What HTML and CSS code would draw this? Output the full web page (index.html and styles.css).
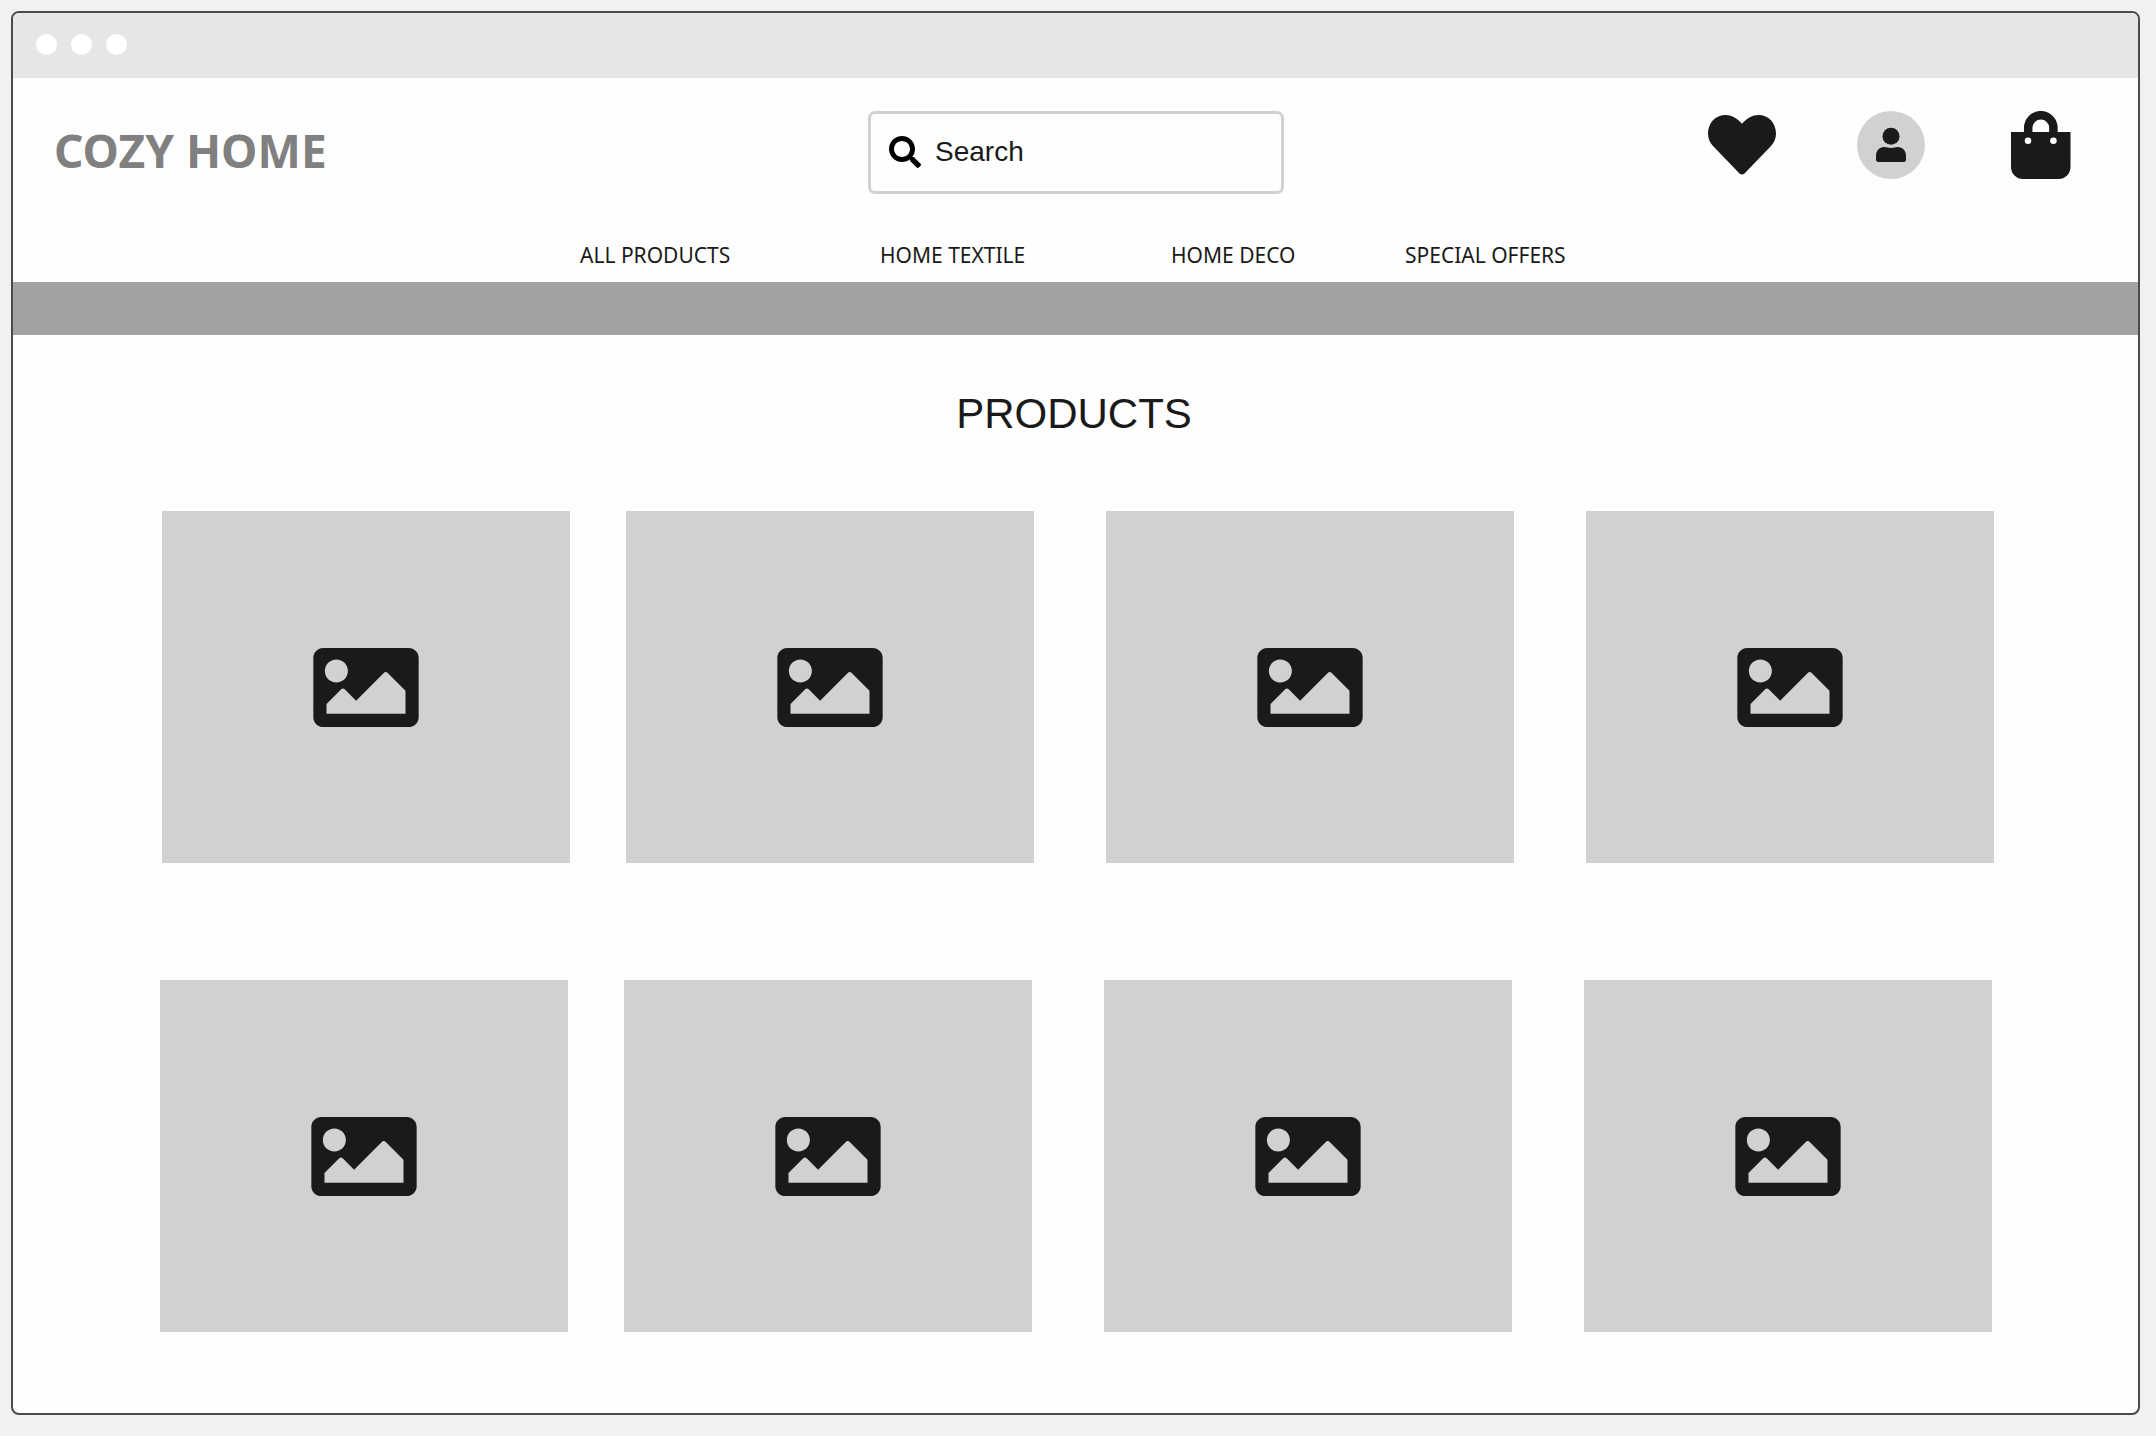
FILE: index.html
```html
<!DOCTYPE html>
<html lang="en">
<head>
<meta charset="utf-8">
<meta name="viewport" content="width=device-width, initial-scale=1">
<title>Cozy Home</title>
<link rel="stylesheet" href="styles.css">
</head>
<body>
<svg class="sprite" aria-hidden="true">
  <symbol id="picture" viewBox="0 64 512 384"><path d="M464 448H48c-26.51 0-48-21.49-48-48V112c0-26.51 21.49-48 48-48h416c26.51 0 48 21.49 48 48v288c0 26.51-21.49 48-48 48zM112 120c-30.928 0-56 25.072-56 56s25.072 56 56 56 56-25.072 56-56-25.072-56-56-56zM64 384h384V272l-87.515-87.515c-4.686-4.686-12.284-4.686-16.971 0L208 320l-55.515-55.515c-4.686-4.686-12.284-4.686-16.971 0L64 336v48z"/></symbol>
</svg>
<div class="window">
  <div class="titlebar"><span class="dot"></span><span class="dot"></span><span class="dot"></span></div>
  <header>
    <div class="masthead">
      <a class="logo" href="#">COZY HOME</a>
      <form class="search" role="search">
        <label for="search" aria-label="Search">
          <svg class="search-icon" viewBox="0 0 512 512" aria-hidden="true"><path d="M505 442.7L405.3 343c-4.5-4.5-10.6-7-17-7H372c27.6-35.3 44-79.7 44-128C416 93.1 322.9 0 208 0S0 93.1 0 208s93.1 208 208 208c48.3 0 92.7-16.4 128-44v16.3c0 6.4 2.5 12.5 7 17l99.7 99.7c9.4 9.4 24.6 9.4 33.9 0l28.3-28.3c9.4-9.4 9.4-24.6.1-34zM208 336c-70.7 0-128-57.2-128-128 0-70.7 57.2-128 128-128 70.7 0 128 57.2 128 128 0 70.7-57.2 128-128 128z"/></svg>
        </label>
        <input id="search" type="text" placeholder="Search">
      </form>
      <div class="actions">
        <button type="button" aria-label="Favourites">
          <svg viewBox="0 -4 68 68"><path d="M34 8.7C29 3 23.5 0 17.5 0 7.5 0 0 8 0 18.5 0 23.5 1.7 27.5 5 31L31.5 58.5Q34 60.5 36.5 58.5L63 31C66.3 27.5 68 23.5 68 18.5 68 8 60.5 0 50.5 0 44.5 0 39 3 34 8.7Z"/></svg>
        </button>
        <button type="button" aria-label="Account">
          <svg viewBox="0 0 68 68"><circle class="disc" cx="34" cy="34" r="34"/><circle cx="34" cy="25.3" r="8.5"/><path d="M19 45C19 39.5 22.5 36 27 36 30 36 31 37 34 37S38 36 41 36C45.5 36 49 39.5 49 45V48.500Q49 51 46.500 51H21.500Q19 51 19 48.500Z"/></svg>
        </button>
        <button type="button" aria-label="Shopping bag">
          <svg viewBox="0 0 68 68"><path class="handle" d="M22.200 22V16.800a12.600 12.600 0 0 1 25.200 0V22"/><path d="M5 21H64.500V56a12 12 0 0 1-12 12H17A12 12 0 0 1 5 56Z"/><circle class="hole" cx="22" cy="29.700" r="3.300"/><circle class="hole" cx="47.400" cy="29.700" r="3.300"/></svg>
        </button>
      </div>
    </div>
    <nav class="menu" aria-label="Main">
      <a href="#">ALL PRODUCTS</a>
      <a href="#">HOME TEXTILE</a>
      <a href="#">HOME DECO</a>
      <a href="#">SPECIAL OFFERS</a>
    </nav>
    <div class="band"></div>
  </header>
  <main>
    <h1>PRODUCTS</h1>
    <div class="shelf">
      <a class="card" href="#" aria-label="Product 1"><svg><use href="#picture"/></svg></a>
      <a class="card" href="#" aria-label="Product 2"><svg><use href="#picture"/></svg></a>
      <a class="card" href="#" aria-label="Product 3"><svg><use href="#picture"/></svg></a>
      <a class="card" href="#" aria-label="Product 4"><svg><use href="#picture"/></svg></a>
    </div>
    <div class="shelf shelf-lower">
      <a class="card" href="#" aria-label="Product 5"><svg><use href="#picture"/></svg></a>
      <a class="card" href="#" aria-label="Product 6"><svg><use href="#picture"/></svg></a>
      <a class="card" href="#" aria-label="Product 7"><svg><use href="#picture"/></svg></a>
      <a class="card" href="#" aria-label="Product 8"><svg><use href="#picture"/></svg></a>
    </div>
  </main>
</div>
</body>
</html>
```
FILE: styles.css
```css
* { box-sizing: border-box; }

body {
  margin: 0;
  padding: 11px 16px 20px 11px;
  background: #f1f1f1;
  color: #1a1a1a;
  font-family: "Noto Sans", sans-serif;
}

a { color: inherit; text-decoration: none; }
svg { display: block; fill: #1a1a1a; }
.sprite { display: none; }

.window {
  overflow: hidden;
  border: 2px solid #4a4a4a;
  border-radius: 8px;
  background: #fefefe;
}

.titlebar {
  display: flex;
  align-items: center;
  gap: 14px;
  height: 65px;
  padding: 0 0 2px 23px;
  background: #e6e6e6;
}
.dot { width: 21px; height: 21px; border-radius: 50%; background: #fff; }

.masthead {
  display: grid;
  grid-template-columns: 1fr 416px 1fr;
  align-items: start;
  padding: 33px 64px 0 41px;
}
.logo {
  padding-top: 8px;
  color: #808080;
  font-size: 46px;
  font-weight: 700;
  line-height: 62px;
}
.search {
  display: flex;
  align-items: center;
  gap: 14px;
  height: 83px;
  margin-left: 12px;
  margin-right: -12px;
  padding: 0 18px 2px;
  border: 3px solid #d1d1d1;
  border-radius: 7px;
}
.search-icon { width: 32px; height: 32px; fill: #000; }
.search input {
  flex: 1;
  min-width: 0;
  padding: 0;
  border: 0;
  outline: 0;
  background: none;
  color: #1a1a1a;
  font: 28px/32px "Liberation Sans", Arial, sans-serif;
}
.search input::placeholder { color: #1a1a1a; opacity: 1; }

.actions { display: flex; justify-content: flex-end; gap: 81px; }
.actions button { width: 68px; height: 68px; padding: 0; border: 0; background: none; cursor: pointer; }
.disc { fill: #d1d1d1; }
.handle { fill: none; stroke: #1a1a1a; stroke-width: 8.5; }
.hole { fill: #fefefe; }

.menu {
  display: grid;
  grid-template-columns: 300px 291px 234px 166px;
  justify-content: center;
  padding: 47px 0 13px;
  font-size: 21px;
  line-height: 28px;
  white-space: nowrap;
}
.band { height: 53px; background: #a2a2a2; }

main { padding: 55px 144px 81px 149px; }
h1 {
  margin: 0 0 73px;
  padding-right: 8px;
  font: 400 42px/48px "Liberation Sans", Arial, sans-serif;
  text-align: center;
}

.shelf { display: flex; }
.shelf-lower { margin: 117px 2px 0 -2px; }
.card {
  display: flex;
  flex: 1;
  align-items: center;
  justify-content: center;
  height: 352px;
  background: #d1d1d1;
}
.card svg { width: 106px; height: 79px; }
.card + .card { margin-left: 56px; }
.card + .card + .card { margin-left: 72px; }
```
